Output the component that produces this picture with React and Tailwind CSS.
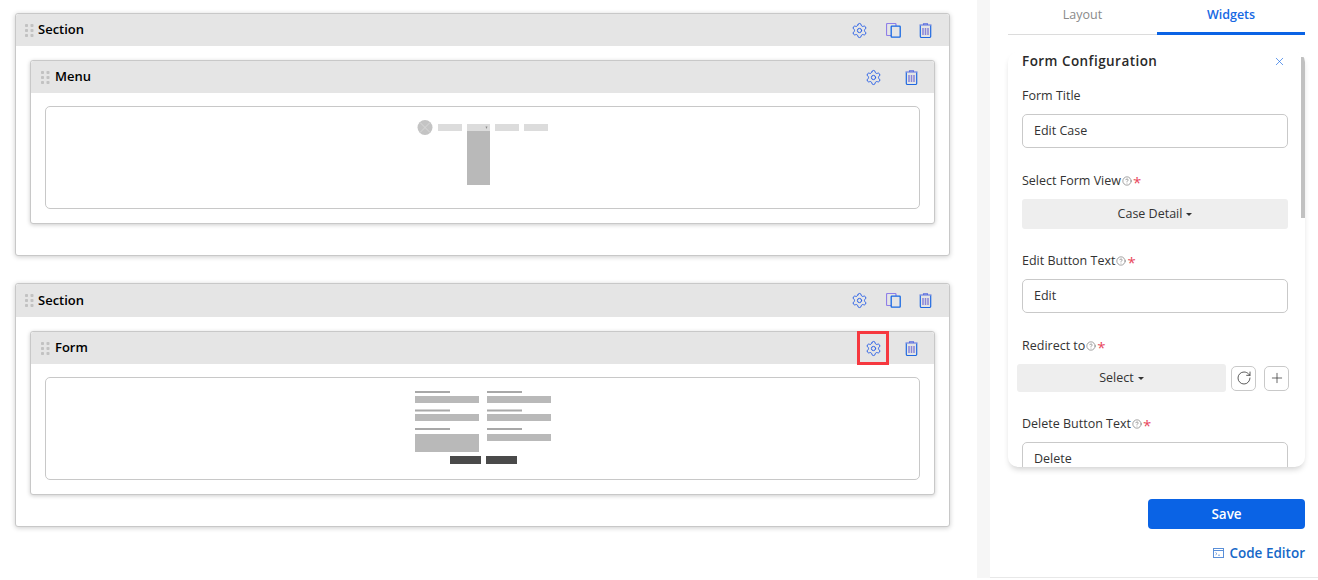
import React from "react";
import { Settings, X, RotateCw, Plus, CircleHelp } from "lucide-react";

const Grip = () => (
  <svg width="9" height="13" viewBox="0 0 9 13" className="shrink-0">
    {[0, 5, 10].map((y) => [0, 5.5].map((x) => <rect key={`${x}-${y}`} x={x} y={y} width="3" height="3" rx="0.8" fill="#c2c2c2" />))}
  </svg>
);

const Gear = () => <Settings size={17} strokeWidth={1.4} className="text-[#2d62e6]" />;

const Copy = () => (
  <svg width="15" height="15" viewBox="0 0 15 15" fill="none">
    <path d="M5 12.5H1.5a1 1 0 0 1-1-1V1.5a1 1 0 0 1 1-1H9a1 1 0 0 1 1 1V3" stroke="#8f7fe8" strokeWidth="1.2" />
    <rect x="5.2" y="3.2" width="9" height="11" rx="0.6" stroke="#1668e3" strokeWidth="1.3" />
  </svg>
);

const Trash = () => (
  <svg width="13" height="15" viewBox="0 0 13 15" fill="none">
    <path d="M4.5 1.5V.7h4v.8M.5 2h12" stroke="#5a6ee0" strokeWidth="1.1" />
    <path d="M1.3 2.5v10.8a1.2 1.2 0 0 0 1.2 1.2h8a1.2 1.2 0 0 0 1.2-1.2V2.5" stroke="#1f68e0" strokeWidth="1.2" />
    <path d="M4 5v7M6.5 5v7M9 5v7" stroke="#8a85d8" strokeWidth="1.5" />
  </svg>
);

const MenuThumb = () => (
  <svg width="132" height="66" viewBox="0 0 132 66" className="block">
    <circle cx="8" cy="7.5" r="7.5" fill="#c4c4c4" />
    <path d="M3 2.5l10 10M13 2.5l-10 10" stroke="#d8d8d8" strokeWidth="1" />
    <rect x="21" y="4" width="24" height="7" fill="#dcdcdc" />
    <rect x="50" y="4" width="23" height="7" fill="#dcdcdc" />
    <path d="M68.5 6.5h2l-1 2.5z" fill="#888" />
    <rect x="78" y="4" width="24" height="7" fill="#dcdcdc" />
    <rect x="107" y="4" width="24" height="7" fill="#dcdcdc" />
    <rect x="50" y="11" width="23" height="54" fill="#b9b9b9" />
  </svg>
);

const FormThumb = () => (
  <svg width="136" height="74" viewBox="0 0 136 74" className="block">
    {[0, 18.5, 37].map((y) => [0, 72].map((x) => <rect key={`${x}-${y}`} x={x} y={y} width="35" height="2" fill="#a8a8a8" />))}
    <rect x="0" y="5" width="64" height="7" fill="#b9b9b9" />
    <rect x="72" y="5" width="64" height="7" fill="#b9b9b9" />
    <rect x="0" y="23" width="64" height="7" fill="#b9b9b9" />
    <rect x="72" y="23" width="64" height="7" fill="#b9b9b9" />
    <rect x="0" y="43" width="64" height="18" fill="#b9b9b9" />
    <rect x="72" y="43" width="64" height="7" fill="#b9b9b9" />
    <rect x="35" y="65" width="31" height="8" fill="#4a4a4a" />
    <rect x="71" y="65" width="31" height="8" fill="#4a4a4a" />
  </svg>
);

const Header = ({ title, height, children, pad }) => (
  <div className={`flex items-center bg-[#e5e5e5] rounded-t-[3px] ${height} ${pad}`}>
    <Grip />
    <span className="ml-[4px] text-[13px] font-semibold text-black">{title}</span>
    <div className="ml-auto flex items-center">{children}</div>
  </div>
);

const Widget = ({ title, children, highlight }) => (
  <div className="mx-[14px] mt-[14px] h-[164px] rounded-[3px] border border-[#c8c8c8] bg-white shadow-[0_1px_4px_rgba(0,0,0,0.2)]">
    <div className="flex h-[32px] items-center rounded-t-[3px] bg-[#e5e5e5] pl-[10px] pr-[16px]">
      <Grip />
      <span className="ml-[5px] text-[13px] font-semibold text-black">{title}</span>
      <div className="ml-auto flex items-center">
        <span className={`mr-[16px] flex h-[34px] w-[32px] items-center justify-center ${highlight ? "border-[3px] border-[#f6383f]" : ""}`}>
          <Gear />
        </span>
        <Trash />
      </div>
    </div>
    <div className="mx-[14px] mt-[13px] flex h-[103px] justify-center rounded-[5px] border border-[#c8c8c8] pt-[13px]">
      {children}
    </div>
  </div>
);

const Section = ({ children, className, tall }) => (
  <div className={`w-[935px] rounded-[3px] border border-[#c8c8c8] bg-white shadow-[0_1px_5px_rgba(0,0,0,0.2)] ${className}`}>
    <div className={`flex items-center rounded-t-[3px] bg-[#e5e5e5] pl-[9px] pr-[17px] ${tall ? "h-[33px]" : "h-[32px]"}`}>
      <Grip />
      <span className="ml-[4px] text-[13px] font-semibold text-black">Section</span>
      <div className="ml-auto flex items-center gap-[18px]">
        <Gear />
        <Copy />
        <Trash />
      </div>
    </div>
    {children}
  </div>
);

const Help = () => <CircleHelp size={10} strokeWidth={1.3} className="ml-[1px] text-[#555]" />;

const Label = ({ children, req }) => (
  <div className="flex h-[18px] items-center text-[12.5px] text-[#333]">
    {children}
    {req && (
      <>
        <Help />
        <span className="ml-[1px] mt-[2px] text-[15px] leading-none text-[#e8475c]">*</span>
      </>
    )}
  </div>
);

const Field = ({ value, className }) => (
  <div className={`flex h-[34px] w-[266px] items-center rounded-[5px] border border-[#c9c9c9] bg-white pl-[11px] text-[12.5px] text-[#333] ${className}`}>
    {value}
  </div>
);

const Caret = () => <span className="ml-[4px] mt-[1px] inline-block border-x-[3px] border-t-[3px] border-x-transparent border-t-[#333]" />;

export default function App() {
  return (
    <div className="flex h-[580px] w-[1318px] overflow-hidden bg-white font-['Open_Sans',sans-serif]">
      <main className="w-[977px] shrink-0 pl-[15px] pt-[13px]">
        <Section className="h-[243px]">
          <Widget title="Menu">
            <MenuThumb />
          </Widget>
        </Section>
        <Section className="mt-[27px] h-[244px]" tall>
          <Widget title="Form" highlight>
            <FormThumb />
          </Widget>
        </Section>
      </main>

      <aside className="ml-[13px] h-[578px] w-[328px] border-b border-[#e8e8e8] bg-white shadow-[0_0_0_13px_#f6f6f6] [clip-path:inset(0_0_0_-13px)]">
        <div className="ml-[18px] flex h-[35px] w-[297px] text-[12.5px]">
          <div className="flex w-[149px] justify-center border-b border-[#dcdcdc] pt-[6px] text-[#8a8a8a]">Layout</div>
          <div className="flex w-[148px] justify-center border-b-[3px] border-[#0a63e5] pt-[6px] font-semibold text-[#1668e3]">Widgets</div>
        </div>

        <div className="relative ml-[18px] mt-[17px] h-[415px] w-[297px] overflow-hidden rounded-[10px] bg-white pl-[14px] shadow-[0_4px_6px_-2px_rgba(0,0,0,0.2)]">
          <div className="absolute right-0 top-[5px] h-[161px] w-[4px] bg-[#c1c1c1]" />
          <div className="flex h-[18px] w-[266px] items-center justify-between">
            <span className="text-[13.5px] font-semibold tracking-[0.45px] text-[#2a2a2a]">Form Configuration</span>
            <X size={13} strokeWidth={1.2} className="mr-[2px] text-[#1668e3]" />
          </div>

          <div className="mt-[17px]"><Label>Form Title</Label></div>
          <Field value="Edit Case" className="mt-[9px]" />

          <div className="mt-[24px]"><Label req>Select Form View</Label></div>
          <div className="mt-[9px] flex h-[30px] w-[266px] items-center justify-center rounded-[3px] bg-[#eeeeee] text-[12.5px] text-[#333]">
            Case Detail<Caret />
          </div>

          <div className="mt-[23px]"><Label req>Edit Button Text</Label></div>
          <Field value="Edit" className="mt-[9px]" />

          <div className="mt-[24px]"><Label req>Redirect to</Label></div>
          <div className="-ml-[5px] mt-[9px] flex items-center">
            <div className="flex h-[28px] w-[209px] items-center justify-center rounded-[3px] bg-[#eeeeee] text-[12.5px] text-[#333]">
              Select<Caret />
            </div>
            <div className="ml-[5px] flex h-[25px] w-[25px] items-center justify-center rounded-[5px] border border-[#c9c9c9]">
              <RotateCw size={16} strokeWidth={1.2} className="text-[#333]" />
            </div>
            <div className="ml-[8px] flex h-[25px] w-[25px] items-center justify-center rounded-[5px] border border-[#c9c9c9]">
              <Plus size={16} strokeWidth={1.1} className="text-[#333]" />
            </div>
          </div>

          <div className="mt-[23px]"><Label req>Delete Button Text</Label></div>
          <Field value="Delete" className="mt-[9px]" />
        </div>

        <div className="ml-[158px] mt-[32px] flex h-[30px] w-[157px] items-center justify-center rounded-[4px] bg-[#0a63e5] text-[13.5px] font-semibold text-white">
          Save
        </div>
        <div className="mr-[13px] mt-[14px] flex items-center justify-end text-[13.5px] font-semibold text-[#1668c8]">
          <svg width="11" height="10" viewBox="0 0 11 10" fill="none" className="mr-[5px]">
            <rect x="0.5" y="0.5" width="10" height="9" stroke="#5a8fd8" />
            <path d="M0.5 2.5h10" stroke="#5a8fd8" />
            <path d="M2.5 4.5l1.5 1.2-1.5 1.2M5 7.2h2" stroke="#5a8fd8" strokeWidth="0.8" />
          </svg>
          Code Editor
        </div>
      </aside>
    </div>
  );
}
